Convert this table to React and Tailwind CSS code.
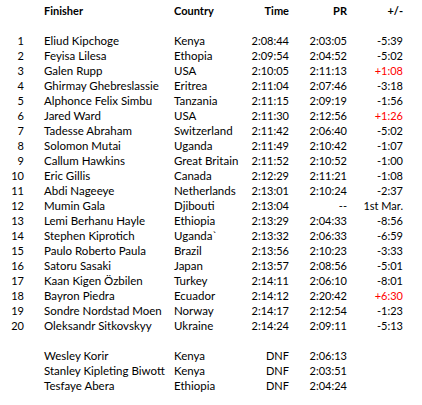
const rows = [
  ["1", "Eliud Kipchoge", "Kenya", "2:08:44", "2:03:05", "-5:39"],
  ["2", "Feyisa Lilesa", "Ethopia", "2:09:54", "2:04:52", "-5:02"],
  ["3", "Galen Rupp", "USA", "2:10:05", "2:11:13", "+1:08"],
  ["4", "Ghirmay Ghebreslassie", "Eritrea", "2:11:04", "2:07:46", "-3:18"],
  ["5", "Alphonce Felix Simbu", "Tanzania", "2:11:15", "2:09:19", "-1:56"],
  ["6", "Jared Ward", "USA", "2:11:30", "2:12:56", "+1:26"],
  ["7", "Tadesse Abraham", "Switzerland", "2:11:42", "2:06:40", "-5:02"],
  ["8", "Solomon Mutai", "Uganda", "2:11:49", "2:10:42", "-1:07"],
  ["9", "Callum Hawkins", "Great Britain", "2:11:52", "2:10:52", "-1:00"],
  ["10", "Eric Gillis", "Canada", "2:12:29", "2:11:21", "-1:08"],
  ["11", "Abdi Nageeye", "Netherlands", "2:13:01", "2:10:24", "-2:37"],
  ["12", "Mumin Gala", "Djibouti", "2:13:04", "--", "1st Mar."],
  ["13", "Lemi Berhanu Hayle", "Ethiopia", "2:13:29", "2:04:33", "-8:56"],
  ["14", "Stephen Kiprotich", "Uganda`", "2:13:32", "2:06:33", "-6:59"],
  ["15", "Paulo Roberto Paula", "Brazil", "2:13:56", "2:10:23", "-3:33"],
  ["16", "Satoru Sasaki", "Japan", "2:13:57", "2:08:56", "-5:01"],
  ["17", "Kaan Kigen Özbilen", "Turkey", "2:14:11", "2:06:10", "-8:01"],
  ["18", "Bayron Piedra", "Ecuador", "2:14:12", "2:20:42", "+6:30"],
  ["19", "Sondre Nordstad Moen", "Norway", "2:14:17", "2:12:54", "-1:23"],
  ["20", "Oleksandr Sitkovskyy", "Ukraine", "2:14:24", "2:09:11", "-5:13"],
];

const dnf = [
  ["Wesley Korir", "Kenya", "2:06:13"],
  ["Stanley Kipleting Biwott", "Kenya", "2:03:51"],
  ["Tesfaye Abera", "Ethiopia", "2:04:24"],
];

const grid = "grid grid-cols-[24px_150px_66px_49px_58px_56px] h-[15px] leading-[15px] whitespace-nowrap";

function Row({ n, name, country, time, pr, diff }) {
  const red = diff && diff.startsWith("+");
  return (
    <div className={grid}>
      <div className="text-right">{n}</div>
      <div className="pl-5 text-[11.5px]">{name}</div>
      <div className="text-[11.5px]">{country}</div>
      <div className="text-right">{time}</div>
      <div className="text-right">{pr}</div>
      <div className={`text-right ${red ? "text-[#ff0000]" : ""}`}>{diff}</div>
    </div>
  );
}

export default function App() {
  return (
    <div className="w-[422px] h-[405px] bg-white text-black pt-[3px] text-[11px] font-['Lato',sans-serif]">
      <div className={`${grid} font-bold`}>
        <div />
        <div className="pl-5">Finisher</div>
        <div>Country</div>
        <div className="text-right">Time</div>
        <div className="text-right">PR</div>
        <div className="text-right">+/-</div>
      </div>
      <div className="h-[15px]" />
      {rows.map(r => (
        <Row key={r[0]} n={r[0]} name={r[1]} country={r[2]} time={r[3]} pr={r[4]} diff={r[5]} />
      ))}
      <div className="h-[15px]" />
      {dnf.map(d => (
        <Row key={d[0]} n="" name={d[0]} country={d[1]} time="DNF" pr={d[2]} diff="" />
      ))}
    </div>
  );
}
